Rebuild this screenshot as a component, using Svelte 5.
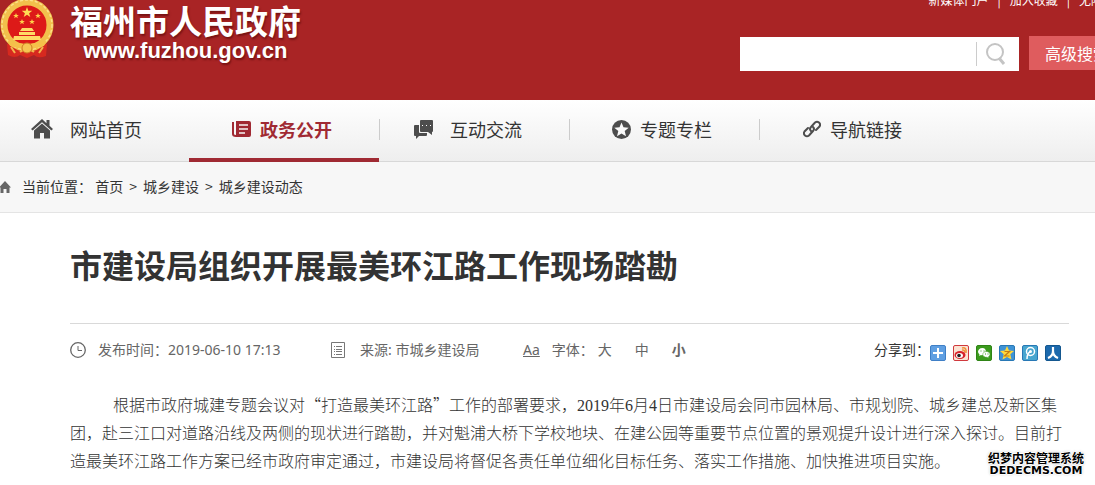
<script lang="ts">
    const topLinks = ['新媒体门户', '加入收藏', '无障碍'];

    const navItems = [
        { icon: 'home', label: '网站首页', wide: true },
        { icon: 'news', label: '政务公开', wide: false },
        { icon: 'chat', label: '互动交流', wide: true },
        { icon: 'star', label: '专题专栏', wide: false },
        { icon: 'link', label: '导航链接', wide: false }
    ];

    const crumbs = ['首页', '城乡建设', '城乡建设动态'];

    const sizes = ['大', '中', '小'];

    const shares = [
        { id: 'more', label: '更多' },
        { id: 'weibo', label: '新浪微博' },
        { id: 'wechat', label: '微信' },
        { id: 'qzone', label: 'QQ空间' },
        { id: 'tqq', label: '腾讯微博' },
        { id: 'renren', label: '人人网' }
    ];

    let activeNav = $state('news');
    let fontSize = $state('小');
    let keyword = $state('');
</script>

<div class="page" lang="zh-CN">
    <header class="header">
        <a class="brand" href="#home">
            <svg class="emblem" viewBox="0 0 54 59" aria-hidden="true">
                <path d="M7 44 L47 44 L46 56 Q38 59 34 55 L27 58 L20 55 Q15 59 8 55Z" fill="#d7291f" />
                <path d="M11 47 L15 53 M43 47 L39 53 M20 52 Q27 46 34 52" stroke="#f3b44d" stroke-width="2" fill="none" />
                <circle cx="27" cy="25" r="23" fill="#dd1a18" stroke="#f2c04c" stroke-width="7" />
                <circle cx="27" cy="25" r="25" fill="none" stroke="#fbe18a" stroke-width="1.500" stroke-dasharray="3 2" />
                <path d="M27 7l1.3 3.8h4l-3.2 2.4 1.2 3.8-3.3-2.3-3.3 2.3 1.2-3.8-3.2-2.4h4z" fill="#ffdc55" />
                <path d="M16 13l.8 2h2.1l-1.7 1.3.6 2-1.8-1.2-1.8 1.2.6-2-1.7-1.3h2.1zM38 13l.8 2h2.1l-1.7 1.3.6 2-1.8-1.2-1.8 1.2.6-2-1.7-1.3h2.1zM22 19l.8 2h2.1l-1.7 1.3.6 2-1.8-1.2-1.8 1.2.6-2-1.7-1.3h2.1zM32 19l.8 2h2.1l-1.7 1.3.6 2-1.8-1.2-1.8 1.2.6-2-1.7-1.3h2.1z" fill="#ffd24a" />
                <path d="M20 31l2-3h10l2 3zM19 32h16v3H19zM14 36h26l1 4H13z" fill="#ffd965" />
                <path d="M8 41 Q27 47 46 41 L44 46 Q27 52 10 46Z" fill="#f5c04a" />
                <circle cx="27" cy="48" r="5" fill="#f6c552" stroke="#cf7c25" />
            </svg>
            <span class="brand-text">
                <span class="brand-name">福州市人民政府</span>
                <span class="brand-url">www.fuzhou.gov.cn</span>
            </span>
        </a>
        <div class="tools">
            <nav class="top-links" aria-label="快捷链接">
                {#each topLinks as link, i}
                    {#if i > 0}<span>|</span>{/if}
                    <a href="#{link}">{link}</a>
                {/each}
            </nav>
            <form class="search" onsubmit={(e) => e.preventDefault()}>
                <div class="search-box">
                    <input type="text" aria-label="搜索" bind:value={keyword} />
                    <button type="submit" aria-label="搜索">
                        <svg width="22" height="24" viewBox="0 0 22 24" fill="none" stroke="#c4c4c4" stroke-width="2" aria-hidden="true">
                            <circle cx="10" cy="10" r="8" />
                            <path d="M14 16l5 6" stroke-width="3" />
                        </svg>
                    </button>
                </div>
                <button type="button" class="advanced">高级搜索</button>
            </form>
        </div>
    </header>

    <nav class="main-nav" aria-label="主导航">
        {#each navItems as item}
            <a
                class="nav-item"
                class:active={activeNav === item.icon}
                class:wide={item.wide}
                href="#{item.icon}"
                onclick={() => (activeNav = item.icon)}
            >
                <span class="nav-icon">
                    {#if item.icon === 'home'}
                        <svg width="22" height="20" viewBox="0 0 22 20" fill="currentColor">
                            <path d="M11 0L0 10l1.600 1.600L11 3.200l9.400 8.400L22 10l-3.500-3.200V1h-3v3.200z" />
                            <path d="M11 4.500l-8 7v8h6V14h4v5.500h6v-8z" />
                        </svg>
                    {:else if item.icon === 'news'}
                        <svg width="20" height="17" viewBox="0 0 20 17">
                            <path d="M2 1v12q0 2 3 2h12" fill="none" stroke="currentColor" stroke-width="2" />
                            <path d="M5 0h13q2 0 2 2v12q0 2-2 2H7q-2 0-2-2z" fill="currentColor" />
                            <path d="M8 4h9M8 8h9M8 12h6" stroke="#f6f6f6" stroke-width="1.500" />
                        </svg>
                    {:else if item.icon === 'chat'}
                        <svg width="19" height="19" viewBox="0 0 19 19" fill="currentColor">
                            <path d="M7 0h11q1 0 1 1v10q0 1-1 1v3l-4-3H7q-1 0-1-1V1q0-1 1-1z" />
                            <path d="M0 6q0-1 1-1h4v7q0 1 1 1h7v2q0 1-1 1H5l-3 3v-3H1q-1 0-1-1z" />
                            <path d="M8 5h1v1H8zM12 5h1v1h-1zM16 5h1v1h-1z" fill="#fff" />
                        </svg>
                    {:else if item.icon === 'star'}
                        <svg width="19" height="19" viewBox="0 0 19 19">
                            <circle cx="9.500" cy="9.500" r="9.500" fill="currentColor" />
                            <path d="M9.500 2.500l2 4.800 5.200.4-4 3.400 1.300 5.100-4.500-2.800L5 16.200l1.300-5.100-4-3.400 5.200-.4z" fill="#fafafa" />
                        </svg>
                    {:else}
                        <svg width="18" height="18" viewBox="0 0 18 18" fill="none" stroke="currentColor" stroke-width="2" stroke-linecap="round">
                            <path d="M8 11q-2-2 0-4l4-4.500q2-1.500 4 0 2 2 .5 4L13 10" />
                            <path d="M10 7q2 2 0 4l-4 4.500q-2 1.500-4 0-2-2-.5-4L5 8" />
                        </svg>
                    {/if}
                </span>
                <span>{item.label}</span>
            </a>
        {/each}
    </nav>

    <nav class="breadcrumb" aria-label="当前位置">
        <svg width="11" height="12" viewBox="0 0 11 12" fill="#666" aria-hidden="true">
            <path d="M5 0l6 6.500H9.500V12H6.500V8h-3v4H.5V6.500H-1z" />
        </svg>
        <p>
            当前位置：
            {#each crumbs as crumb, i}
                {#if i > 0}<span class="sep">&gt;</span>{/if}<a href="#{crumb}">{crumb}</a>
            {/each}
        </p>
    </nav>

    <main class="article">
        <h1>市建设局组织开展最美环江路工作现场踏勘</h1>

        <div class="meta">
            <span class="meta-item time">
                <svg width="16" height="16" viewBox="0 0 16 16" fill="none" stroke="#666" aria-hidden="true">
                    <circle cx="8" cy="8" r="7.300" stroke-width="1.300" />
                    <path d="M8 4v4.500h4" />
                </svg>
                <span>发布时间：2019-06-10 17:13</span>
            </span>
            <span class="meta-item source">
                <svg width="14" height="16" viewBox="0 0 14 16" fill="none" stroke="#777" aria-hidden="true">
                    <path d="M.5.5h13v15H.5z" />
                    <path d="M3 4.500h1M5 4.500h6M3 7.500h1M5 7.500h6M3 9.500h1M5 9.500h6M3 12.500h1M5 12.500h6" />
                </svg>
                <span>来源: 市城乡建设局</span>
            </span>
            <span class="font-size">
                <span class="aa">Aa</span>
                <span>字体：</span>
                <span class="sizes">
                    {#each sizes as size}
                        <button type="button" class:current={fontSize === size} onclick={() => (fontSize = size)}>{size}</button>
                    {/each}
                </span>
            </span>
            <span class="share">
                <span>分享到：</span>
                <span class="share-list">
                    {#each shares as s}
                        <a class="share-icon {s.id}" href="#{s.id}" aria-label={s.label}>
                            <svg width="14" height="14" viewBox="0 0 14 14" aria-hidden="true">
                                {#if s.id === 'more'}
                                    <path d="M7 2v10M2 7h10" stroke="#fff" stroke-width="2" />
                                {:else if s.id === 'weibo'}
                                    <path d="M8 2q5-1 4 5M8 4q3-.5 2.500 2.500" fill="none" stroke="#f0923c" stroke-width="1.500" />
                                    <ellipse cx="6" cy="9" rx="5.500" ry="4" fill="#d8232a" />
                                    <ellipse cx="5.500" cy="9.500" rx="3.500" ry="2.500" fill="#fff" />
                                    <circle cx="5" cy="9.500" r="1.800" fill="#222" />
                                {:else if s.id === 'wechat'}
                                    <path d="M5.500 2C2.500 2 1 4 1 5.800 1 7 2 8 2.500 8.500L2 10l2-1q1 .3 2 .1C10 9 10 2 5.500 2z" fill="#fff" />
                                    <path d="M9.500 5.500C7 5.500 5.800 7 5.800 8.500S7.500 11.500 10 11.300l1.700.9-.3-1.400Q13 10 13 8.500c0-1.700-1.500-3-3.500-3z" fill="#fff" stroke="#3b9b1d" stroke-width=".5" />
                                    <path d="M4 4.500v1M7 4.500v1M8.500 7.500v1M11 7.500v1" stroke="#3b9b1d" />
                                {:else if s.id === 'qzone'}
                                    <path d="M7 0l2 4.500 5 .5-3.700 3.300L11.500 13.500 7 11l-4.500 2.500 1.200-5.200L0 5l5-.5z" fill="#ffd83b" />
                                    <path d="M4.500 5.500h5l-5 4.500h5" fill="none" stroke="#c47b13" stroke-width="1.200" />
                                {:else if s.id === 'tqq'}
                                    <circle cx="7.500" cy="5.500" r="4" fill="none" stroke="#fff" stroke-width="1.500" />
                                    <path d="M7.500 5.500Q4 7 4 13" fill="none" stroke="#fff" stroke-width="1.500" />
                                    <circle cx="7.500" cy="5.500" r="1.500" fill="#fff" />
                                {:else}
                                    <path d="M7 1v4q0 5-5 7M7 5q0 5 5 7" fill="none" stroke="#fff" stroke-width="2.200" />
                                {/if}
                            </svg>
                        </a>
                    {/each}
                </span>
            </span>
        </div>

        <p class="body-text">
            根据市政府城建专题会议对“打造最美环江路”工作的部署要求，<span class="num">2019</span>年<span class="num">6</span>月<span class="num">4</span>日市建设局会同市园林局、市规划院、城乡建总及新区集团，赴三江口对道路沿线及两侧的现状进行踏勘，并对魁浦大桥下学校地块、在建公园等重要节点位置的景观提升设计进行深入探讨。目前打造最美环江路工作方案已经市政府审定通过，市建设局将督促各责任单位细化目标任务、落实工作措施、加快推进项目实施。
        </p>

        <div class="watermark">
            <span>织梦内容管理系统</span>
            <span class="domain">DEDECMS.COM</span>
        </div>
    </main>
</div>

<style>
    :global(body) {
        background: #fff;
        overflow-x: hidden;
    }

    .page {
        font-family: "Noto Sans CJK SC", sans-serif;
        font-size: 14px;
        color: #333;
        overflow: hidden;
    }

    a {
        color: inherit;
        text-decoration: none;
    }

    button {
        border: 0;
        padding: 0;
        background: none;
        font: inherit;
        color: inherit;
        cursor: pointer;
    }

    svg {
        display: block;
        flex: none;
    }

    .header {
        display: flex;
        justify-content: space-between;
        height: 100px;
        background: #a92425;
        color: #fff;
        overflow: hidden;
    }

    .brand {
        display: flex;
        gap: 16px;
    }

    .emblem {
        width: 54px;
        height: 59px;
    }

    .brand-text {
        display: flex;
        flex-direction: column;
        font-weight: 700;
        text-shadow: 1px 2px 2px rgba(70, 0, 0, 0.5);
    }

    .brand-name {
        font-size: 33px;
        line-height: 40px;
    }

    .brand-url {
        font-family: "Liberation Sans", sans-serif;
        font-size: 22px;
        line-height: 22px;
        text-align: center;
    }

    .tools {
        margin-right: -30px;
    }

    .top-links {
        display: flex;
        justify-content: flex-end;
        gap: 9px;
        margin-top: -9px;
        padding-right: 10px;
        font-size: 12px;
        line-height: 18px;
    }

    .search {
        display: flex;
        gap: 10px;
        margin-top: 27px;
    }

    .search-box {
        display: flex;
        align-items: center;
        width: 279px;
        height: 34px;
        margin-top: 1px;
        background: #fff;
    }

    .search-box input {
        flex: 1;
        min-width: 0;
        height: 34px;
        box-sizing: border-box;
        border: 0;
        padding: 0 10px;
        background: transparent;
        font: inherit;
        outline: none;
    }

    .search-box button {
        width: 43px;
        height: 24px;
        box-sizing: border-box;
        border-left: 1px solid #ccc;
        padding-left: 8px;
    }

    .advanced {
        width: 96px;
        height: 34px;
        background: #df5c5e;
        font-size: 16px;
    }

    .main-nav {
        display: flex;
        height: 62px;
        box-sizing: border-box;
        border-bottom: 1px solid #d8d8d8;
        background: linear-gradient(#fff, #eee);
        font-size: 18px;
    }

    .nav-item {
        display: grid;
        grid-template-columns: 71px 1fr;
        align-items: center;
        position: relative;
        width: 190px;
        height: 62px;
        padding-bottom: 4px;
        box-sizing: border-box;
    }

    .nav-item:first-child {
        grid-template-columns: 70px 1fr;
        width: 189px;
    }

    .nav-icon {
        display: flex;
        justify-content: flex-end;
        padding-right: 9px;
        color: #4d4d4d;
    }

    .wide .nav-icon {
        padding-right: 17px;
    }

    .active {
        border-bottom: 4px solid #a02a33;
        padding-bottom: 0;
        color: #a02a33;
        font-weight: 700;
    }

    .active .nav-icon {
        color: #a02a33;
    }

    .nav-item:nth-child(n + 3)::before {
        content: '';
        position: absolute;
        left: 0;
        top: 19px;
        height: 21px;
        border-left: 1px solid #ccc;
    }

    .breadcrumb {
        display: flex;
        align-items: center;
        gap: 11px;
        height: 50px;
        border-bottom: 1px solid #e4e4e4;
        background: #f7f7f7;
    }

    .breadcrumb p {
        margin: 0;
        padding-bottom: 2px;
    }

    .sep {
        margin: 0 6px;
    }

    .article {
        position: relative;
        padding: 0 26px 10px 70px;
    }

    h1 {
        margin: 0;
        padding: 27px 0 34px;
        border-bottom: 1px solid #d9d9d9;
        font-size: 32px;
        line-height: 49px;
        font-weight: 700;
    }

    .meta {
        display: flex;
        align-items: center;
        height: 52px;
        color: #666;
        font-family: "Noto Sans", "Noto Sans CJK SC", sans-serif;
        line-height: 22px;
        white-space: nowrap;
    }

    .meta-item {
        display: flex;
        align-items: center;
    }

    .time {
        gap: 12px;
        width: 261px;
    }

    .source {
        gap: 15px;
        width: 192px;
    }

    .font-size {
        display: flex;
        gap: 12px;
    }

    .aa {
        text-decoration: underline;
    }

    .sizes {
        display: flex;
        gap: 23px;
        margin-left: -8px;
    }

    .current {
        font-weight: 700;
    }

    .share {
        display: flex;
        align-items: center;
        margin-left: auto;
        margin-right: 8px;
        color: #333;
    }

    .share-list {
        display: flex;
        gap: 7px;
        padding-top: 5px;
    }

    .share-icon {
        border: 1px solid #2878b5;
        border-radius: 2px;
        background: #3f93d6;
    }

    .more {
        background: #5f9fe2;
        border-color: #3f7fc6;
    }

    .weibo {
        background: #fbe3d3;
        border-color: #d0393d;
    }

    .wechat {
        background: #3b9b1d;
        border-color: #2f8416;
    }

    .tqq {
        background: #48a6cf;
    }

    .renren {
        background: #1c69ad;
        border-color: #14578f;
    }

    .body-text {
        margin: 0;
        padding-top: 14px;
        font-size: 16px;
        line-height: 28px;
        font-weight: 300;
        text-indent: 43px;
    }

    .num {
        font-family: "Liberation Serif", serif;
        line-height: 16px;
    }

    .watermark {
        position: absolute;
        right: 11px;
        bottom: 7px;
        display: flex;
        flex-direction: column;
        align-items: center;
        color: #000;
        font-size: 12px;
        line-height: 13px;
        font-weight: 700;
        text-shadow: 1px 0 #fff, -1px 0 #fff, 0 1px #fff, 0 -1px #fff, 0 0 3px #999;
    }

    .domain {
        font-family: "DejaVu Sans", sans-serif;
        font-size: 11px;
    }
</style>
